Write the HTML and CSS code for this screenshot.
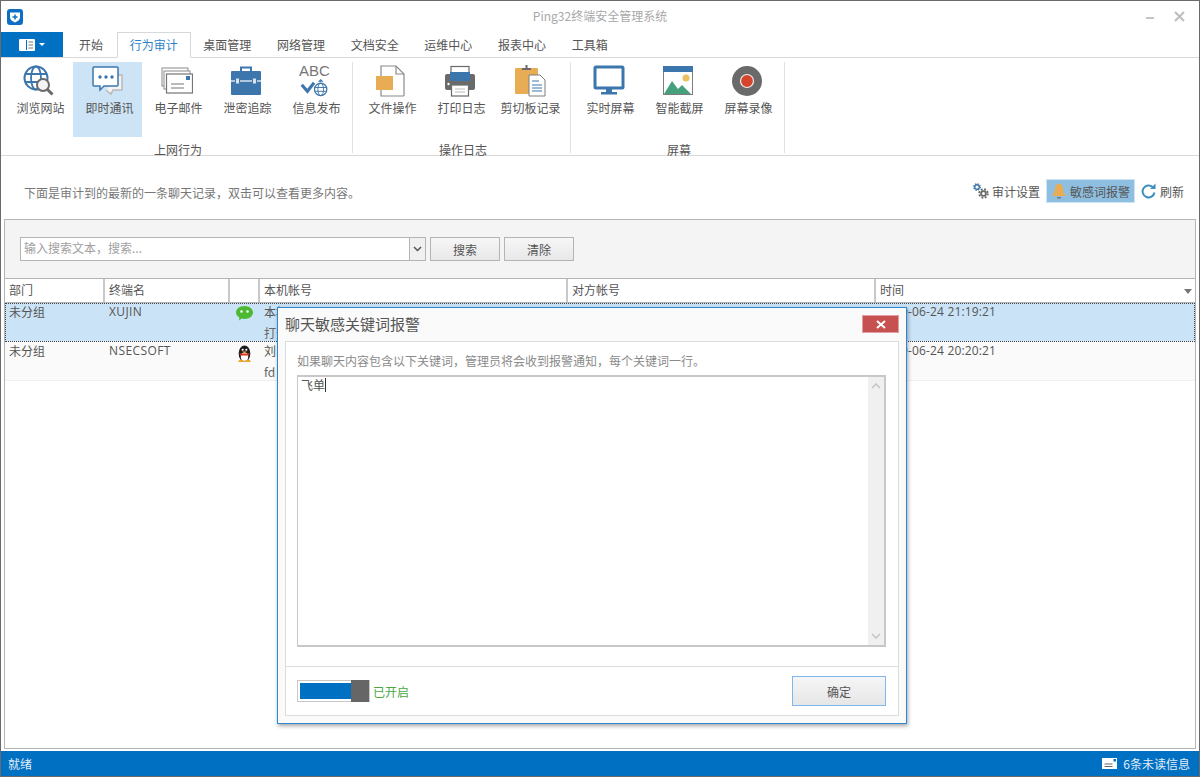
FILE: index.html
```html
<!DOCTYPE html>
<html lang="zh-CN">
<head>
    <meta charset="UTF-8">
    <title>Ping32终端安全管理系统</title>
    <link rel="stylesheet" href="styles.css">
</head>
<body>
<div class="window">
    <div class="titlebar">
        <svg class="app-logo" width="16" height="16" viewBox="0 0 16 16"><rect width="16" height="16" rx="3" fill="#0d6fc4"/><path d="M3 3.500h10v5c0 2.300-2.500 4-5 5-2.500-1-5-2.700-5-5z" fill="#fff"/><path d="M8 5.500v5M5.500 8h5" stroke="#0d6fc4" stroke-width="1.500"/></svg>
        <span class="app-title">Ping32终端安全管理系统</span>
        <div class="win-btns">
            <span class="win-min"></span>
            <svg width="11" height="11" viewBox="0 0 11 11"><path d="M1 1l9 9M10 1l-9 9" stroke="#bdbdbd" stroke-width="2"/></svg>
        </div>
    </div>

    <div class="tabs">
        <div class="file-tab">
            <svg width="16" height="12" viewBox="0 0 16 12"><rect width="16" height="12" rx="1" fill="#fff"/><rect x="7" y="1" width="1" height="10" fill="#0070c3"/><path d="M9.500 3h4.500M9.500 6h4.500M9.500 9h4.500" stroke="#777" stroke-width="1"/><rect x="1.500" y="1.500" width="4.500" height="9" fill="#fff"/></svg>
            <i class="file-caret"></i>
        </div>
        <span class="tab">开始</span>
        <span class="tab active">行为审计</span>
        <span class="tab">桌面管理</span>
        <span class="tab">网络管理</span>
        <span class="tab">文档安全</span>
        <span class="tab">运维中心</span>
        <span class="tab">报表中心</span>
        <span class="tab">工具箱</span>
    </div>

    <div class="ribbon">
        <div class="group g1">
            <div class="items">
                <div class="item">
                    <svg width="32" height="32" viewBox="0 0 32 32" fill="none"><circle cx="13" cy="13" r="11.500" stroke="#3d76ad" stroke-width="2"/><ellipse cx="13" cy="13" rx="5" ry="11.500" stroke="#3d76ad" stroke-width="1.800"/><path d="M2 9h22M2 17h22" stroke="#3d76ad" stroke-width="1.800"/><circle cx="20" cy="20" r="6" fill="#f4f4f4" stroke="#6a6a6a" stroke-width="2"/><path d="M24.500 24.500l5 5" stroke="#6a6a6a" stroke-width="3"/></svg>
                    <span>浏览网站</span>
                </div>
                <div class="item selected">
                    <svg width="32" height="32" viewBox="0 0 32 32" fill="none"><path d="M14 25l5 4 2-4h9V10h-4" stroke="#b9b9b9" stroke-width="1.500" fill="#f3f3f3"/><path d="M2 2h23a1 1 0 0 1 1 1v17a1 1 0 0 1-1 1H12l-4 4v-4H2a1 1 0 0 1-1-1V3a1 1 0 0 1 1-1z" fill="#fff" stroke="#3d76ad" stroke-width="1.500"/><circle cx="8" cy="12" r="1.700" fill="#3d76ad"/><circle cx="14" cy="12" r="1.700" fill="#3d76ad"/><circle cx="20" cy="12" r="1.700" fill="#3d76ad"/></svg>
                    <span>即时通讯</span>
                </div>
                <div class="item">
                    <svg width="32" height="32" viewBox="0 0 32 32" fill="none"><rect x="1" y="3" width="26" height="18" fill="#fff" stroke="#8a8a8a"/><rect x="3" y="6" width="26" height="18" fill="#fff" stroke="#8a8a8a"/><rect x="5.500" y="9" width="26" height="19" fill="#fff" stroke="#757575" stroke-width="1.200"/><rect x="25" y="11" width="4" height="4" fill="#3d76ad"/><path d="M10 19h13M10 23h13" stroke="#777" stroke-width="1.200"/></svg>
                    <span>电子邮件</span>
                </div>
                <div class="item">
                    <svg width="32" height="32" viewBox="0 0 32 32" fill="none"><path d="M11 6V2.500h10V6" stroke="#3d76ad" stroke-width="2"/><rect x="1" y="6" width="30" height="24" rx="1" fill="#3d76ad"/><path d="M1 16h30" stroke="#fff" stroke-width="1.200"/><rect x="5.500" y="13" width="4" height="6" rx="1" fill="#d8e4ef" stroke="#3d76ad"/><rect x="22.500" y="13" width="4" height="6" rx="1" fill="#d8e4ef" stroke="#3d76ad"/></svg>
                    <span>泄密追踪</span>
                </div>
                <div class="item info-item">
                    <span class="abc">ABC</span>
                    <svg width="32" height="20" viewBox="0 0 32 20" fill="none"><path d="M2 7l6 7 7-9" stroke="#3d76ad" stroke-width="3.200"/><circle cx="22" cy="12" r="6.500" stroke="#3d76ad" stroke-width="1.300"/><ellipse cx="22" cy="12" rx="3" ry="6.500" stroke="#3d76ad"/><path d="M15.500 10h13M15.500 14h13" stroke="#3d76ad"/><path d="M22 1l3 3h-6z" fill="#3d76ad"/></svg>
                    <span>信息发布</span>
                </div>
            </div>
            <div class="group-name">上网行为</div>
        </div>
        <div class="group g2">
            <div class="items">
                <div class="item">
                    <svg width="32" height="32" viewBox="0 0 32 32" fill="none"><path d="M6 1h15l8 8v21a1 1 0 0 1-1 1H6z" fill="#fff" stroke="#8a8a8a" stroke-width="1.200"/><path d="M21 1v8h8" stroke="#8a8a8a" stroke-width="1.200"/><rect x="1" y="11" width="17" height="14" fill="#e8ac55"/></svg>
                    <span>文件操作</span>
                </div>
                <div class="item">
                    <svg width="32" height="32" viewBox="0 0 32 32" fill="none"><rect x="7" y="1.500" width="18" height="9" fill="#fff" stroke="#6a6a6a" stroke-width="1.200"/><rect x="1" y="9" width="30" height="16" rx="2" fill="#6a6a6a"/><rect x="6" y="7" width="20" height="9" fill="#3d76ad"/><rect x="7.500" y="20" width="17" height="11" fill="#fff" stroke="#6a6a6a" stroke-width="1.200"/><path d="M11 24h10M11 27h10" stroke="#bbb"/><circle cx="4.500" cy="19" r="1.200" fill="#fff"/></svg>
                    <span>打印日志</span>
                </div>
                <div class="item">
                    <svg class="clip-icon" width="32" height="32" viewBox="0 0 32 32" fill="none"><rect x="1" y="3" width="23" height="26" rx="1" fill="#e8ac55"/><path d="M8 5V3h3.500V0h2v3H17v2z" fill="#6a6a6a"/><path d="M15 10h11l5 5v16H15z" fill="#fff" stroke="#7d7d7d"/><path d="M18 16h7M18 20h10M18 23h10M18 26h10" stroke="#3d76ad" stroke-width="1.200"/></svg>
                    <span>剪切板记录</span>
                </div>
            </div>
            <div class="group-name">操作日志</div>
        </div>
        <div class="group g3">
            <div class="items">
                <div class="item">
                    <svg width="32" height="32" viewBox="0 0 32 32" fill="none"><rect x="2" y="2" width="28" height="21" rx="1" fill="#fff" stroke="#3d76ad" stroke-width="3"/><rect x="13" y="24" width="6" height="4" fill="#3d76ad"/><rect x="8" y="27" width="16" height="2.500" fill="#3d76ad"/></svg>
                    <span>实时屏幕</span>
                </div>
                <div class="item">
                    <svg width="32" height="32" viewBox="0 0 32 32" fill="none"><rect x="1.500" y="1.500" width="29" height="28" fill="#fff" stroke="#7d7d7d"/><rect x="1" y="1" width="30" height="6" fill="#3d76ad"/><circle cx="24" cy="13" r="3.500" fill="#eec05f"/><path d="M2 29l8-13 6 8 4-4 9 9z" fill="#47a07c"/></svg>
                    <span>智能截屏</span>
                </div>
                <div class="item">
                    <svg width="32" height="32" viewBox="0 0 32 32"><circle cx="16" cy="16" r="15" fill="#6a6a6a"/><circle cx="16" cy="16" r="6.500" fill="#d5452d" stroke="#eee" stroke-width="1.200"/></svg>
                    <span>屏幕录像</span>
                </div>
            </div>
            <div class="group-name">屏幕</div>
        </div>
    </div>

    <div class="notice-bar">
        <span class="notice">下面是审计到的最新的一条聊天记录，双击可以查看更多内容。</span>
        <div class="actions">
            <span class="action">
                <svg width="16" height="16" viewBox="0 0 16 16" fill="none"><circle cx="4" cy="4" r="2.300" stroke="#3d76ad" stroke-width="1.400"/><circle cx="4" cy="4" r="3.300" stroke="#3d76ad" stroke-width="1.200" stroke-dasharray="1.400 1.200"/><circle cx="10.500" cy="10.500" r="2.400" stroke="#6a6a6a" stroke-width="1.800"/><circle cx="10.500" cy="10.500" r="4.300" stroke="#6a6a6a" stroke-width="1.800" stroke-dasharray="1.900 1.500"/></svg>
                审计设置
            </span>
            <span class="action on">
                <svg width="16" height="16" viewBox="0 0 16 16"><path d="M8 1c3 0 4 2 4 5 0 3 2 5 3 7H1c1-2 3-4 3-7 0-3 1-5 4-5z" fill="#e8ac55"/><rect x="6" y="14" width="4" height="1.500" fill="#7a7a7a"/></svg>
                敏感词报警
            </span>
            <span class="action">
                <svg width="16" height="16" viewBox="0 0 16 16" fill="none"><path d="M13.500 9.500a6 6 0 1 1-1.800-5.500" stroke="#3d8fbf" stroke-width="2"/><path d="M14.500 0.500v5.500h-5.500z" fill="#3d8fbf"/></svg>
                刷新
            </span>
        </div>
    </div>

    <div class="panel">
        <div class="search-bar">
            <div class="combo">
                <span class="placeholder">输入搜索文本，搜索...</span>
                <span class="combo-btn"><svg width="9" height="6" viewBox="0 0 9 6" fill="none"><path d="M1 1l3.500 3.500L8 1" stroke="#555" stroke-width="1.500"/></svg></span>
            </div>
            <button class="btn">搜索</button>
            <button class="btn">清除</button>
        </div>
        <div class="grid-head">
            <div class="th c-dept">部门</div>
            <div class="th c-term">终端名</div>
            <div class="th c-icon"></div>
            <div class="th c-local">本机帐号</div>
            <div class="th c-peer">对方帐号</div>
            <div class="th c-time">时间<i class="sort"></i></div>
        </div>
        <div class="row selected">
            <div class="td c-dept">未分组</div>
            <div class="td c-term">XUJIN</div>
            <div class="td c-icon">
                <svg width="17" height="15" viewBox="0 0 17 15"><path d="M8.500 0C13 0 17 2.800 17 6.500S13 13 8.500 13c-1 0-2-.1-2.800-.4L3 14.500l.4-3C1.300 10.300 0 8.500 0 6.500 0 2.800 4 0 8.500 0z" fill="#4cb933"/><circle cx="5.500" cy="5.500" r="1.200" fill="#fff"/><circle cx="11.500" cy="5.500" r="1.200" fill="#fff"/></svg>
            </div>
            <div class="td c-local"><div>本机</div><div class="sub">打开</div></div>
            <div class="td c-peer"></div>
            <div class="td c-time">2019-06-24 21:19:21</div>
        </div>
        <div class="row">
            <div class="td c-dept">未分组</div>
            <div class="td c-term">NSECSOFT</div>
            <div class="td c-icon">
                <svg width="17" height="17" viewBox="0 0 16 16"><ellipse cx="8" cy="8" rx="5.500" ry="7.500" fill="#1c1c1c"/><ellipse cx="8" cy="11" rx="3.500" ry="4" fill="#fff"/><circle cx="6.300" cy="4.500" r="1" fill="#fff"/><circle cx="9.700" cy="4.500" r="1" fill="#fff"/><path d="M3 8h10l-1 1.800H4z" fill="#d8321f"/><path d="M5.700 6h4.600L8 7.600z" fill="#f2b01e"/><path d="M3 14h4v2H2zM9 14h4l1 2H9z" fill="#f2a51e"/></svg>
            </div>
            <div class="td c-local"><div>刘</div><div class="sub">fd</div></div>
            <div class="td c-peer"></div>
            <div class="td c-time">2019-06-24 20:20:21</div>
        </div>
    </div>

    <div class="statusbar">
        <span>就绪</span>
        <span class="unread">
            <svg width="15" height="11" viewBox="0 0 15 11"><rect width="15" height="11" fill="#fff"/><rect x="11.500" y="1" width="2.500" height="2.500" fill="#0070c3"/><path d="M2.500 6h8M2.500 8.500h8" stroke="#666"/></svg>
            6条未读信息
        </span>
    </div>

    <div class="dialog">
        <div class="dialog-head">
            <span class="dialog-title">聊天敏感关键词报警</span>
            <span class="dialog-close"><svg width="10" height="9" viewBox="0 0 10 9"><path d="M1 1l8 7M9 1L1 8" stroke="#fff" stroke-width="2"/></svg></span>
        </div>
        <div class="dialog-body">
            <div class="dialog-main">
                <p class="hint">如果聊天内容包含以下关键词，管理员将会收到报警通知，每个关键词一行。</p>
                <div class="editor">
                    <div class="editor-text">飞单<i class="caret"></i></div>
                    <div class="scrollbar">
                        <svg width="10" height="6" viewBox="0 0 10 6" fill="none"><path d="M1 5l4-4 4 4" stroke="#c4c4c4" stroke-width="1.500"/></svg>
                        <svg width="10" height="6" viewBox="0 0 10 6" fill="none"><path d="M1 1l4 4 4-4" stroke="#c4c4c4" stroke-width="1.500"/></svg>
                    </div>
                </div>
            </div>
            <div class="dialog-foot">
                <div class="switch-wrap">
                    <div class="switch"><span class="switch-fill"></span><span class="switch-knob"></span></div>
                    <span class="switch-label">已开启</span>
                </div>
                <button class="btn ok">确定</button>
            </div>
        </div>
    </div>
</div>
</body>
</html>
```

FILE: styles.css
```css
* {
    box-sizing: border-box;
}

body, html {
    margin: 0;
    padding: 0;
    height: 100%;
    background-color: #fff;
    font-family: "Noto Sans CJK SC", "Liberation Sans", sans-serif;
    font-size: 12px;
    color: #555;
}

.window {
    position: relative;
    width: 1200px;
    height: 777px;
    border: 1px solid #6a6a6a;
    display: flex;
    flex-direction: column;
    overflow: hidden;
    background-color: #fff;
}

/* title bar */
.titlebar {
    position: relative;
    height: 31px;
    flex: none;
    display: flex;
    align-items: center;
    padding: 0 0 0 6px;
}

.app-logo {
    margin-top: 1px;
}

.app-title {
    position: absolute;
    left: 0;
    right: 0;
    top: 7px;
    text-align: center;
    color: #a8a8a8;
    font-size: 12px;
    line-height: 16px;
}

.win-btns {
    margin-left: auto;
    width: 52px;
    display: flex;
    align-items: center;
    gap: 20px;
    margin-right: 7px;
}

.win-min {
    display: block;
    width: 8px;
    height: 2px;
    background-color: #c4c4c4;
    margin-left: 6px;
    margin-top: 3px;
}

/* tabs */
.tabs {
    height: 26px;
    flex: none;
    display: flex;
    align-items: stretch;
    border-bottom: 1px solid #d8d8d8;
}

.file-tab {
    width: 62px;
    background-color: #0070c3;
    display: flex;
    align-items: center;
    justify-content: center;
    gap: 4px;
}

.file-caret {
    display: block;
    width: 0;
    height: 0;
    border-left: 3px solid transparent;
    border-right: 3px solid transparent;
    border-top: 3px solid #fff;
}

.tab {
    padding: 0 12px;
    height: 25px;
    line-height: 26px;
    white-space: nowrap;
    color: #555;
    margin-right: 1.700px;
}

.tab:first-of-type {
    margin-left: 4px;
}

.tab.active {
    height: 26px;
    color: #2c82c9;
    background-color: #fff;
    border: 1px solid #d8d8d8;
    border-bottom: 1px solid #fff;
    line-height: 24px;
    margin-right: 0.500px;
}

/* ribbon */
.ribbon {
    height: 98px;
    flex: none;
    display: flex;
    border-bottom: 1px solid #d8d8d8;
    padding-top: 4px;
}

.group {
    border-right: 1px solid #e2e2e2;
    height: 91px;
    display: flex;
    flex-direction: column;
}

.g1 {
    width: 352px;
    padding-left: 3px;
}

.g2 {
    width: 218px;
    padding-left: 3px;
}

.g3 {
    width: 214px;
    padding-left: 3px;
}

.items {
    display: flex;
    height: 75px;
}

.item {
    width: 69px;
    height: 75px;
    padding-top: 3px;
    display: flex;
    flex-direction: column;
    align-items: center;
    white-space: nowrap;
}

.item svg {
    flex: none;
}

.item .clip-icon {
    margin-left: 3px;
}

.item span {
    margin-top: 3px;
    margin-left: 4px;
    line-height: 16px;
}

.item.selected {
    background-color: #cde4f6;
}

.item .abc {
    margin: -1px 0 0 0;
    font-family: "Liberation Sans", sans-serif;
    font-size: 15px;
    line-height: 14px;
    color: #777;
}

.info-item svg {
    margin-top: 0;
    height: 19px;
}

.group-name {
    text-align: center;
    line-height: 16px;
    margin-top: 5px;
}

/* notice and actions */
.notice-bar {
    height: 63px;
    flex: none;
    display: flex;
    justify-content: space-between;
    padding: 23px 15px 0 23px;
}

.notice {
    color: #777;
    line-height: 16px;
    margin-top: 6px;
}

.actions {
    display: flex;
    align-items: flex-start;
    gap: 6px;
}

.action {
    display: flex;
    align-items: center;
    gap: 3px;
    height: 24px;
    white-space: nowrap;
    color: #555;
}

.action.on {
    background-color: #8fbfe0;
    border: 1px solid #cde4f6;
    padding: 0 4px;
}

/* search panel and grid */
.panel {
    margin: 0 3px;
    flex: 1;
    border: 1px solid #b4b4b4;
    background-color: #fff;
    overflow: hidden;
}

.search-bar {
    height: 59px;
    background-color: #f4f4f4;
    border-bottom: 1px solid #b4b4b4;
    display: flex;
    align-items: flex-start;
    padding: 17px 0 0 15px;
    gap: 4px;
}

.combo {
    width: 406px;
    height: 24px;
    border: 1px solid #b4b4b4;
    background-color: #fff;
    display: flex;
    justify-content: space-between;
    padding-left: 3px;
    line-height: 20px;
    color: #a0a0a0;
}

.combo-btn {
    width: 16px;
    border-left: 1px solid #b4b4b4;
    background-color: #f0f0f0;
    display: flex;
    align-items: center;
    justify-content: center;
}

.btn {
    font-family: inherit;
    font-size: 12px;
    color: #555;
    width: 70px;
    height: 24px;
    padding: 0;
    border: 1px solid #b4b4b4;
    background: linear-gradient(#f6f6f6, #e8e8e8);
}

.grid-head {
    height: 24px;
    display: flex;
    border-bottom: 1px solid #b4b4b4;
    background-color: #fff;
}

.th {
    position: relative;
    border-right: 2px solid #c8c8c8;
    padding-left: 4px;
    line-height: 22px;
    color: #555;
}

.th:last-child {
    border-right: none;
}

.sort {
    position: absolute;
    right: 3px;
    top: 10px;
    width: 0;
    height: 0;
    border-left: 4px solid transparent;
    border-right: 4px solid transparent;
    border-top: 5px solid #777;
}

.c-dept {
    width: 100px;
}

.c-term {
    width: 125px;
}

.c-icon {
    width: 30px;
}

.c-local {
    width: 308px;
}

.c-peer {
    width: 308px;
}

.c-time {
    flex: 1;
}

.row {
    height: 39px;
    display: flex;
    background-color: #fafafa;
    border-bottom: 1px solid #f0f0f0;
    color: #555;
}

.row.selected {
    background-color: #cbe3f6;
    outline: 1px dotted #444;
    outline-offset: -1px;
}

.td {
    padding: 0 0 0 4px;
    line-height: 17px;
    white-space: nowrap;
}

.td.c-term {
    font-family: "Open Sans", sans-serif;
    letter-spacing: 0.400px;
}

.td.c-time {
    font-family: "Open Sans", sans-serif;
    letter-spacing: 0.150px;
}

.td.c-icon {
    padding: 3px 0 0 6px;
}

.sub {
    margin-top: 4px;
    color: #666;
}

/* status bar */
.statusbar {
    height: 25px;
    flex: none;
    margin-top: 2px;
    background-color: #0070c3;
    color: #e4eef8;
    display: flex;
    justify-content: space-between;
    align-items: center;
    padding: 0 9px 0 7px;
}

.unread {
    display: flex;
    align-items: center;
    gap: 6px;
}

/* dialog */
.dialog {
    position: absolute;
    left: 276px;
    top: 306px;
    width: 630px;
    height: 417px;
    background-color: #fafafa;
    border: 1px solid #2c86d0;
    box-shadow: 1px 2px 4px rgba(0, 0, 0, 0.35);
    padding: 0 7px 7px 7px;
    display: flex;
    flex-direction: column;
}

.dialog-head {
    height: 33px;
    flex: none;
    display: flex;
    justify-content: space-between;
    align-items: flex-start;
    padding: 6px 0 0 0;
}

.dialog-title {
    font-size: 15px;
    line-height: 20px;
    color: #555;
}

.dialog-close {
    width: 37px;
    height: 18px;
    margin-top: 1px;
    background-color: #c75050;
    border: 1px solid #e0a0a0;
    display: flex;
    align-items: center;
    justify-content: center;
}

.dialog-body {
    flex: 1;
    background-color: #fff;
    border: 1px solid #dcdcdc;
    display: flex;
    flex-direction: column;
}

.dialog-main {
    height: 325px;
    border-bottom: 1px solid #dcdcdc;
    padding: 11px 12px 0 11px;
}

.hint {
    margin: 0 0 6px 0;
    line-height: 16px;
    color: #8a8a8a;
}

.editor {
    height: 272px;
    border: 1px solid #c8c8c8;
    border-width: 2px 2px 2px 1px;
    display: flex;
    justify-content: space-between;
}

.editor-text {
    padding: 0 0 0 3px;
    line-height: 16px;
    color: #555;
}

.caret {
    display: inline-block;
    width: 1px;
    height: 14px;
    background-color: #333;
    vertical-align: -2px;
}

.scrollbar {
    width: 16px;
    background-color: #f0f0f0;
    display: flex;
    flex-direction: column;
    justify-content: space-between;
    align-items: center;
    padding: 6px 0;
}

.dialog-foot {
    flex: 1;
    display: flex;
    justify-content: space-between;
    align-items: center;
    padding: 0 12px 0 11px;
}

.switch-wrap {
    display: flex;
    align-items: center;
    gap: 3px;
}

.switch {
    width: 73px;
    height: 22px;
    border: 1px solid #c8c8c8;
    padding: 2px 0 2px 2px;
    display: flex;
}

.switch-fill {
    flex: 1;
    background-color: #0070c3;
}

.switch-knob {
    width: 18px;
    margin: -3px 0;
    background-color: #666;
}

.switch-label {
    color: #4aa83f;
}

.btn.ok {
    width: 94px;
    height: 30px;
    border: 1px solid #7db8ee;
    background: linear-gradient(#f6f6f6, #e6e6e6);
}
```
